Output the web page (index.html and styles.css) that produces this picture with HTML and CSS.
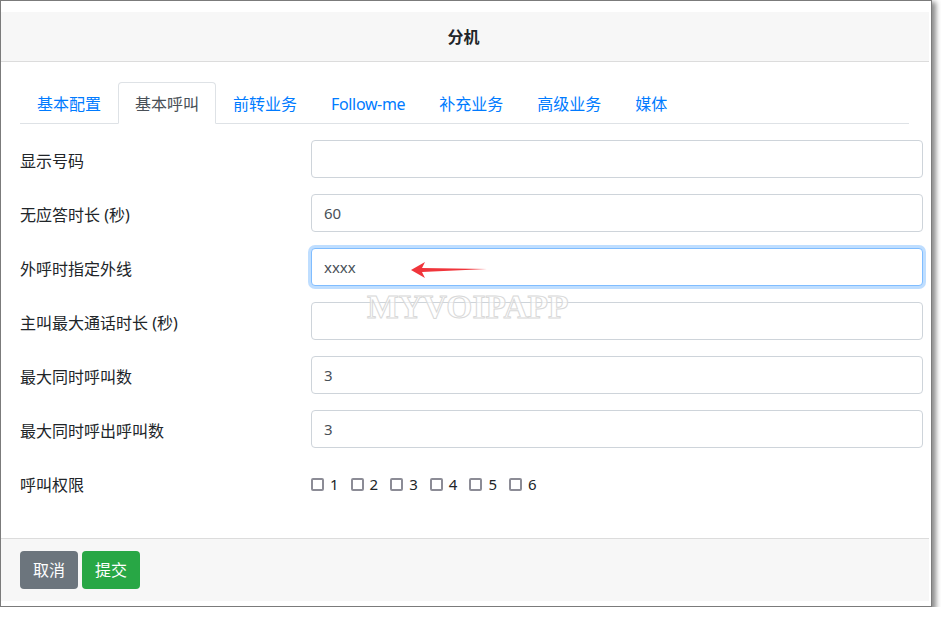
FILE: index.html
```html
<!DOCTYPE html>
<html lang="zh-CN">
<head>
<meta charset="utf-8">
<title>分机</title>
<link rel="stylesheet" href="styles.css">
</head>
<body>
<div class="window">
  <div class="modal">
    <div class="modal-header"><h5 class="modal-title">分机</h5></div>
    <div class="modal-body">
      <ul class="nav-tabs">
        <li><a class="tab">基本配置</a></li>
        <li><a class="tab active">基本呼叫</a></li>
        <li><a class="tab">前转业务</a></li>
        <li><a class="tab tab-latin">Follow-me</a></li>
        <li><a class="tab">补充业务</a></li>
        <li><a class="tab">高级业务</a></li>
        <li><a class="tab">媒体</a></li>
      </ul>
      <div class="tab-content">
        <div class="form-row"><label class="form-label">显示号码</label><input class="form-control" type="text" value=""></div>
        <div class="form-row"><label class="form-label">无应答时长 (秒)</label><input class="form-control" type="text" value="60"></div>
        <div class="form-row"><label class="form-label">外呼时指定外线</label><input class="form-control focus" type="text" value="xxxx"></div>
        <div class="form-row"><label class="form-label">主叫最大通话时长 (秒)</label><input class="form-control" type="text" value=""></div>
        <div class="form-row"><label class="form-label">最大同时呼叫数</label><input class="form-control" type="text" value="3"></div>
        <div class="form-row"><label class="form-label">最大同时呼出呼叫数</label><input class="form-control" type="text" value="3"></div>
        <div class="form-row"><label class="form-label">呼叫权限</label>
          <div class="checks">
            <label class="check"><span class="box"></span>1</label>
            <label class="check"><span class="box"></span>2</label>
            <label class="check"><span class="box"></span>3</label>
            <label class="check"><span class="box"></span>4</label>
            <label class="check"><span class="box"></span>5</label>
            <label class="check"><span class="box"></span>6</label>
          </div>
        </div>
      </div>
    </div>
    <div class="modal-footer">
      <button class="btn btn-secondary">取消</button>
      <button class="btn btn-success">提交</button>
    </div>
  </div>
  <div class="watermark">MYVOIPAPP</div>
  <svg class="arrow" width="80" height="20" viewBox="0 0 80 20"><polygon points="0,9 14,1 11,7 76,8 11,11 14,17" fill="#f0353b"/></svg>
</div>
</body>
</html>
```
FILE: styles.css
```css
* { box-sizing: border-box; }
html, body { margin: 0; padding: 0; background: #fff; }
body { font-family: "Noto Sans", "Noto Sans CJK SC", sans-serif; font-size: 16px; line-height: 1.5; color: #212529; }

.window {
  position: relative;
  width: 932px;
  height: 607px;
  border: 1px solid #7b7b7b;
  background: #fff;
  padding: 11px 2px 4px 0;
  box-shadow: 3px 3px 5px 1px rgba(0,0,0,0.45);
}
.modal { background: #fff; }
.modal-header {
  background: #f7f7f7;
  border-bottom: 1px solid #dcdcdc;
  height: 50px;
  display: flex;
  align-items: center;
  justify-content: center;
}
.modal-title { margin: 0; font-size: 16px; font-weight: 700; color: #212529; line-height: 24px; padding-right: 3px; }

.modal-body { padding: 20px 6px 20px 19px; }
.nav-tabs {
  list-style: none; margin: 0 14px 0 0; padding: 0;
  display: flex;
  border-bottom: 1px solid #dee2e6;
}
.nav-tabs li { margin-bottom: -1px; }
.tab {
  display: block;
  padding: 9px 16px 7px;
  line-height: 24px;
  border: 1px solid transparent;
  border-radius: 4px 4px 0 0;
  color: #007bff;
  font-size: 16px;
}
.tab-latin { letter-spacing: -0.35px; }
.tab.active { color: #495057; background: #fff; border-color: #dee2e6 #dee2e6 #fff; }

.tab-content { padding-top: 16px; }
.form-row { display: flex; align-items: center; margin-bottom: 16px; height: 38px; }
.form-label { width: 291px; font-size: 16px; padding-top: 3px; }
.form-control {
  flex: 1;
  height: 38px;
  padding: 6px 12px;
  font: inherit;
  font-size: 15px;
  color: #495057;
  border: 1px solid #ced4da;
  border-radius: 4px;
  background: #fff;
  outline: none;
}
.form-control.focus { border-color: #80bdff; box-shadow: 0 0 0 3px rgba(0,123,255,.25); }

.checks { display: flex; align-items: center; padding-top: 2px; }
.check { display: flex; align-items: center; width: 39.6px; font-size: 15px; }
.box { width: 13px; height: 13px; border: 2px solid #8c8c96; border-radius: 2px; margin-right: 6px; }

.modal-footer {
  background: #f7f7f7;
  border-top: 1px solid #dcdcdc;
  padding: 12px 19px;
  display: flex;
  gap: 4px;
  height: 63px;
}
.btn {
  font: inherit; font-size: 16px;
  height: 38px; width: 58px; padding: 0;
  border: 1px solid transparent; border-radius: 4px;
  color: #fff; line-height: 36px;
}
.btn-secondary { background: #6c757d; }
.btn-success { background: #28a745; }

.watermark {
  position: absolute; left: 366px; top: 281px;
  font-family: "Liberation Serif", serif; font-weight: 700; font-size: 33.5px;
  color: rgba(255,255,255,0.6);
  -webkit-text-stroke: 1px #d8d8d8;
}
.arrow { position: absolute; left: 410px; top: 260px; }
```
